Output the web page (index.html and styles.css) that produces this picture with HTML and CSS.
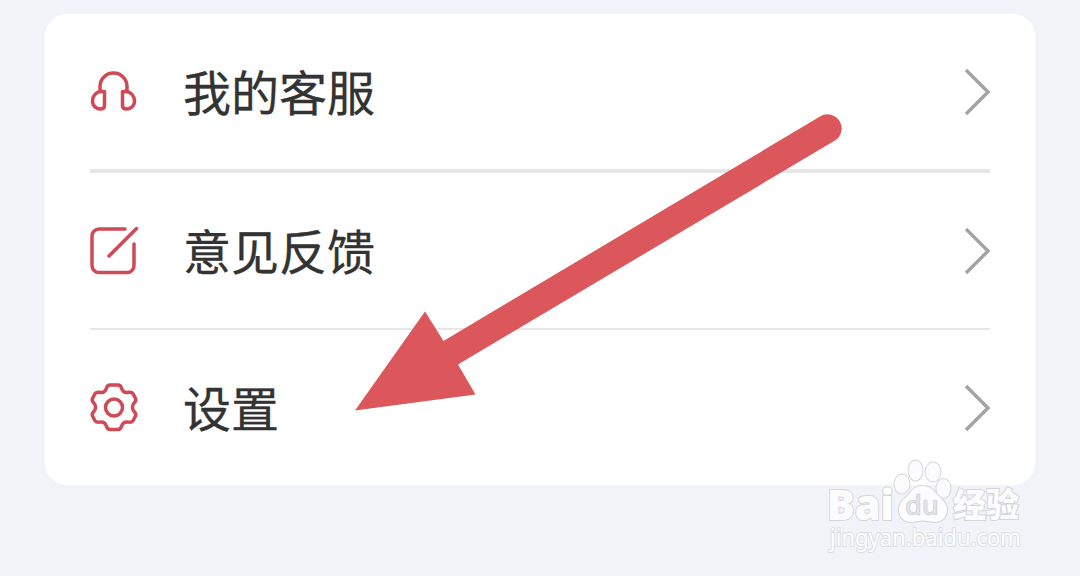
FILE: index.html
```html
<!DOCTYPE html>
<html lang="zh-CN">
<head>
<meta charset="utf-8">
<title>设置</title>
<link rel="stylesheet" href="styles.css">
</head>
<body>
<main class="card">
  <div class="row row-service">
    <svg class="icon" viewBox="0 0 48 48"><path d="M10 23V18.500a13.500 13.500 0 0 1 27 0V23M14.500 23.500H12C6 23.500 2.500 28 2.500 33S6.500 41 10.500 41c2.500 0 4-1.200 4-3.500zM32.500 23.500H35C41 23.500 44.500 28 44.500 33s-4 8-8 8c-2.500 0-4-1.200-4-3.500z"/></svg>
    <span class="label">我的客服</span>
    <svg class="chevron" viewBox="0 0 28 48"><path d="M3 2l22 22L3 46"/></svg>
  </div>
  <div class="row row-feedback">
    <svg class="icon" viewBox="0 0 48 48"><path d="M35 2H9a7 7 0 0 0-7 7V38.500a7 7 0 0 0 7 7h28a7 7 0 0 0 7-7V17M19 29L46.500 1.500"/></svg>
    <span class="label">意见反馈</span>
    <svg class="chevron" viewBox="0 0 28 48"><path d="M3 2l22 22L3 46"/></svg>
  </div>
  <div class="row row-settings">
    <svg class="icon" viewBox="0 0 48 48"><path d="M20 1h8q2.500 0 3.500 3c1 3.500 3.500 5 7 4.300q3.500-.6 4.700 1.700l2.300 4.500q1 2-1.200 4.200c-2.500 2.500-2.500 6.500 0 9q2.200 2.200 1.200 4.300l-2.300 4.500q-1.200 2.200-4.700 1.600c-3.500-.6-6 .8-7 4.300q-1 3-3.500 3h-8q-2.500 0-3.500-3c-1-3.500-3.500-4.900-7-4.300q-3.500.6-4.700-1.600L2.500 32q-1-2.100 1.200-4.300c2.500-2.500 2.500-6.500 0-9Q1.500 16.500 2.500 14.500l2.300-4.500q1.200-2.300 4.700-1.700c3.500.7 6-.8 7-4.300q1-3 3.500-3z"/><circle cx="24" cy="23.400" r="8.500"/></svg>
    <span class="label">设置</span>
    <svg class="chevron" viewBox="0 0 28 48"><path d="M3 2l22 22L3 46"/></svg>
  </div>
</main>
<svg class="arrow" viewBox="0 0 1080 576"><path d="M355 410.500L425 311.500L443.500 341L820 116.500A14 14 0 0 1 835 140.500L458 364.500L475.500 394.500Z"/></svg>
<svg class="watermark" viewBox="0 0 220 110">
  <g class="mark">
    <text class="brand" x="7" y="69.500" textLength="67" lengthAdjust="spacingAndGlyphs">Bai</text>
    <ellipse cx="82" cy="34" rx="7.500" ry="9.500"/>
    <ellipse cx="95.500" cy="20.500" rx="7" ry="10"/>
    <ellipse cx="113" cy="22" rx="7.500" ry="9.500"/>
    <ellipse cx="123.500" cy="38.500" rx="7" ry="9.500"/>
    <path d="M102 36c-6 0-9 3-12 7-4 5-11 8-11 17 0 8 6 12 12 12 4 0 7-1.500 11.500-1.500s8 1.500 12.500 1.500c7 0 12-5 12-12 0-8-7-12-11-17-4-5-8-7-14-7z"/>
    <text class="experience" x="133" y="67" textLength="66" lengthAdjust="spacingAndGlyphs">经验</text>
    <text class="site" x="10" y="96" textLength="191" lengthAdjust="spacingAndGlyphs">jingyan.baidu.com</text>
  </g>
  <text class="du" x="85" y="65" textLength="34" lengthAdjust="spacingAndGlyphs">du</text>
</svg>
</body>
</html>
```
FILE: styles.css
```css
* { box-sizing: border-box; }
body {
  margin: 0;
  padding: 14px 45px 0;
  height: 576px;
  overflow: hidden;
  background: #f2f3f8;
  font-family: "Noto Sans CJK SC", sans-serif;
}
.card {
  height: 471px;
  padding: 0 45px;
  border-radius: 22px;
  background: #fff;
}
.row {
  display: flex;
  align-items: center;
}
.row-service { height: 159px; border-bottom: 4px solid #e7e7e7; }
.row-feedback { height: 157px; border-bottom: 2px solid #e7e7e7; }
.row-settings { height: 155px; }
.icon {
  width: 48px;
  height: 48px;
  overflow: visible;
  fill: none;
  stroke: #cf4a57;
  stroke-width: 3.5;
  stroke-linecap: round;
  stroke-linejoin: round;
}
.label {
  flex: 1;
  margin-left: 45px;
  padding-bottom: 3px;
  color: #333;
  font-size: 48px;
  line-height: 70px;
  -webkit-text-stroke: .3px #333;
}
.chevron {
  width: 28px;
  height: 48px;
  margin-right: -1px;
  fill: none;
  stroke: #a3a3a3;
  stroke-width: 3.4;
}
.arrow {
  position: absolute;
  left: 0;
  top: 0;
  width: 1080px;
  height: 576px;
  fill: #db575b;
}
.watermark {
  position: absolute;
  left: 820px;
  top: 450px;
  width: 220px;
  height: 110px;
}
.mark {
  fill: #fcfcfe;
  stroke: #d5d6da;
  stroke-width: 2;
  paint-order: stroke;
}
.brand { font: 800 43px "Open Sans", sans-serif; }
.experience { font: 900 33px "Noto Sans CJK SC", sans-serif; }
.site { font: 24px "Noto Sans", sans-serif; stroke: #dddee3; }
.du {
  font: 600 27px "Open Sans", sans-serif;
  fill: #e3e4e9;
  stroke: #cfd0d5;
  stroke-width: .7;
}
```
